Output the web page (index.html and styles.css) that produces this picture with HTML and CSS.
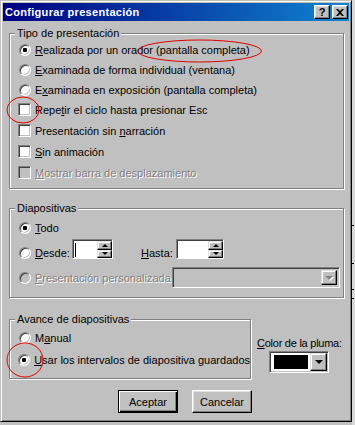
FILE: index.html
```html
<!DOCTYPE html>
<html lang="es">
<head>
<meta charset="utf-8">
<title>Configurar presentación</title>
<link rel="stylesheet" href="styles.css">
</head>
<body>
<div class="screen">
  <div class="window">
    <div class="titlebar">
      <span class="title">Configurar presentación</span>
      <div class="tbtns">
        <span class="tbtn q">?</span>
        <span class="tbtn"><svg width="8" height="7" viewBox="0 0 8 7"><path d="M0 0h2l2 2 2-2h2L5 3.5 8 7H6L4 5 2 7H0l3-3.5z" fill="#000"/></svg></span>
      </div>
    </div>
    <div class="content">
      <div class="group g1">
        <div class="legend">Tipo de presentación</div>
        <div class="row r20"><span class="ctl"><span class="radio on"></span></span><span><u>R</u>ealizada por un orador (pantalla completa)</span></div>
        <div class="row r20"><span class="ctl"><span class="radio"></span></span><span><u>E</u>xaminada de forma individual (ventana)</span></div>
        <div class="row r19"><span class="ctl"><span class="radio"></span></span><span>E<u>x</u>aminada en exposición (pantalla completa)</span></div>
        <div class="row"><span class="ctl"><span class="check"></span></span><span>Repe<u>t</u>ir el ciclo hasta presionar Esc</span></div>
        <div class="row"><span class="ctl"><span class="check"></span></span><span>Presentación sin <u>n</u>arración</span></div>
        <div class="row"><span class="ctl"><span class="check"></span></span><span><u>S</u>in animación</span></div>
        <div class="row"><span class="ctl"><span class="check dis"></span></span><span class="distext"><u>M</u>ostrar barra de desplazamiento</span></div>
      </div>
      <div class="group g2">
        <div class="legend">Diapositivas</div>
        <div class="row r25"><span class="ctl"><span class="radio on"></span></span><span><u>T</u>odo</span></div>
        <div class="row r25">
          <span class="ctl"><span class="radio"></span></span>
          <span class="lbl-desde"><u>D</u>esde:</span>
          <span class="spin s1"><span class="f"><span class="caret"></span></span><span class="ud"><span class="up"><i></i></span><span class="dn"><i></i></span></span></span>
          <span class="lbl-hasta"><u>H</u>asta:</span>
          <span class="spin s2"><span class="f"></span><span class="ud"><span class="up"><i></i></span><span class="dn"><i></i></span></span></span>
        </div>
        <div class="row r25">
          <span class="ctl"><span class="radio dis"></span></span>
          <span class="lbl-pers distext"><u>P</u>resentación personalizada:</span>
          <span class="combo"><span class="ddbtn"><i class="garrow"></i></span></span>
        </div>
      </div>
      <div class="bottom">
        <div class="group g3">
          <div class="legend">Avance de diapositivas</div>
          <div class="row r23"><span class="ctl"><span class="radio"></span></span><span>M<u>a</u>nual</span></div>
          <div class="row r22"><span class="ctl"><span class="radio on"></span></span><span><u>U</u>sar los intervalos de diapositiva guardados</span></div>
        </div>
        <div class="pen">
          <div class="pen-label"><u>C</u>olor de la pluma:</div>
          <div class="pcombo"><span class="swwrap"><span class="swatch"></span></span><span class="ddbtn2"><i class="barrow"></i></span></div>
        </div>
      </div>
      <div class="buttons">
        <span class="btn default">Aceptar</span>
        <span class="btn">Cancelar</span>
      </div>
    </div>
    <svg class="marks" width="352" height="422" viewBox="0 0 352 422">
      <ellipse cx="199.5" cy="51" rx="62" ry="11" fill="none" stroke="#e00000" stroke-width="1"/>
      <ellipse cx="23" cy="110" rx="16" ry="13" fill="none" stroke="#e00000" stroke-width="1"/>
      <ellipse cx="25" cy="360" rx="18" ry="17" fill="none" stroke="#e00000" stroke-width="1"/>
    </svg>
  </div>
  <div class="edge"></div>
</div>
</body>
</html>
```
FILE: styles.css
```css
body {
  margin: 0;
  background: #c0c0c0;
  font-family: "Liberation Sans", Arial, sans-serif;
  font-size: 11px;
  color: #000;
}
u { text-decoration: underline; text-underline-offset: 1px; }

.screen {
  display: flex;
  width: 355px;
  height: 425px;
  overflow: hidden;
}
.window {
  position: relative;
  flex-shrink: 0;
  width: 352px;
  height: 422px;
  box-sizing: border-box;
  background: #c0c0c0;
  border: 1px solid;
  border-color: #c0c0c0 #000 #000 #c0c0c0;
  box-shadow: inset 1px 1px #fff, inset -1px -1px #808080;
  padding: 2px;
  display: flex;
  flex-direction: column;
}
.edge {
  flex-shrink: 0;
  width: 3px;
  height: 425px;
  background:
    linear-gradient(#000, #000) 0 225px / 2px 1px no-repeat,
    linear-gradient(#000, #000) 0 263px / 2px 1px no-repeat,
    linear-gradient(#000, #000) 0 289px / 2px 1px no-repeat,
    linear-gradient(#000, #000) 0 298px / 2px 1px no-repeat,
    #d8d8d8;
}

.titlebar {
  height: 18px;
  flex-shrink: 0;
  background: linear-gradient(to right, #000080, #1084d0);
  display: flex;
  align-items: center;
  justify-content: space-between;
  padding: 0 1px 0 2px;
}
.title {
  color: #fff;
  font-weight: bold;
  font-size: 11px;
  letter-spacing: 0.3px;
}
.tbtns { display: flex; gap: 2px; }
.tbtn {
  width: 16px;
  height: 14px;
  box-sizing: border-box;
  background: #c0c0c0;
  border: 1px solid;
  border-color: #fff #000 #000 #fff;
  box-shadow: inset -1px -1px #808080, inset 1px 1px #dfdfdf;
  display: flex;
  align-items: center;
  justify-content: center;
}
.tbtn.q { font-weight: bold; font-size: 11px; line-height: 12px; }

.content {
  display: flex;
  flex-direction: column;
  padding: 12px 5px 0 6px;
}

.group {
  border: 1px solid #808080;
  box-shadow: inset 1px 1px #fff, 1px 1px #fff;
  display: flex;
  flex-direction: column;
  padding: 0 0 5px 8px;
}
.legend {
  align-self: flex-start;
  margin: -7px 0 0 -3px;
  padding: 0 2px;
  height: 13px;
  line-height: 13px;
  background: #c0c0c0;
}
.g2 { margin-top: 19px; padding-bottom: 7px; }
.g3 { width: 242px; box-sizing: border-box; padding-bottom: 7px; }

.row {
  display: flex;
  align-items: center;
  height: 21px;
  white-space: nowrap;
}
.r19 { height: 19px; }
.r20 { height: 20px; }
.r22 { height: 22px; }
.r23 { height: 23px; }
.r25 { height: 25px; }

.ctl {
  width: 13px;
  margin-right: 4px;
  display: flex;
  justify-content: center;
}
.radio {
  position: relative;
  width: 12px;
  height: 12px;
  box-sizing: border-box;
  border-radius: 50%;
  border: 1px solid;
  border-color: #808080 #fff #fff #808080;
  box-shadow: inset 1px 1px #404040, inset -1px -1px #c0c0c0;
  background: #fff;
}
.radio.dis { background: #c0c0c0; }
.radio.on::after {
  content: "";
  position: absolute;
  left: 3px;
  top: 3px;
  width: 4px;
  height: 4px;
  border-radius: 1px;
  background: #000;
}
.check {
  width: 13px;
  height: 13px;
  box-sizing: border-box;
  border: 1px solid;
  border-color: #808080 #fff #fff #808080;
  box-shadow: inset 1px 1px #404040, inset -1px -1px #c0c0c0;
  background: #fff;
}
.check.dis { background: #c0c0c0; }
.distext { color: #808080; text-shadow: 1px 1px 0 #fff; }

.lbl-desde { width: 37px; }
.lbl-hasta { width: 35px; margin-left: 28px; }
.lbl-pers { width: 137px; }

.spin {
  display: flex;
  height: 20px;
  box-sizing: border-box;
  margin-bottom: 7px;
  border: 1px solid;
  border-color: #808080 #fff #fff #808080;
  box-shadow: inset 1px 1px #404040;
  padding: 1px 0 0 1px;
}
.s1 .f { width: 22px; }
.s2 .f { width: 29px; }
.spin .f {
  background: #fff;
  display: flex;
  align-items: center;
  padding-left: 1px;
}
.caret { width: 1px; height: 14px; background: #000; }
.ud {
  width: 15px;
  display: flex;
  flex-direction: column;
}
.ud > span {
  flex: 1;
  box-sizing: border-box;
  background: #c0c0c0;
  border: 1px solid;
  border-color: #dfdfdf #000 #000 #dfdfdf;
  box-shadow: inset -1px -1px #808080, inset 1px 1px #fff;
  display: flex;
  align-items: center;
  justify-content: center;
}
.up i {
  width: 0; height: 0;
  border: 3px solid transparent;
  border-top-width: 0;
  border-bottom-color: #000;
}
.dn i {
  width: 0; height: 0;
  border: 3px solid transparent;
  border-bottom-width: 0;
  border-top-color: #000;
}

.combo {
  width: 168px;
  height: 21px;
  box-sizing: border-box;
  border: 1px solid;
  border-color: #808080 #fff #fff #808080;
  box-shadow: inset 1px 1px #404040, inset -1px -1px #c0c0c0;
  background: #c0c0c0;
  display: flex;
  justify-content: flex-end;
  padding: 2px;
}
.ddbtn, .ddbtn2 {
  width: 16px;
  box-sizing: border-box;
  background: #c0c0c0;
  border: 1px solid;
  border-color: #dfdfdf #000 #000 #dfdfdf;
  box-shadow: inset -1px -1px #808080, inset 1px 1px #fff;
  display: flex;
  align-items: center;
  justify-content: center;
}
.garrow {
  width: 0; height: 0;
  border: 4px solid transparent;
  border-bottom-width: 0;
  border-top-color: #808080;
  filter: drop-shadow(1px 1px 0 #fff);
}
.barrow {
  width: 0; height: 0;
  border: 4px solid transparent;
  border-bottom-width: 0;
  border-top-color: #000;
}

.bottom { display: flex; margin-top: 21px; }
.pen { margin-left: 6px; display: flex; flex-direction: column; }
.pen-label {
  margin-top: 18px;
  height: 13px;
  line-height: 13px;
  white-space: nowrap;
  letter-spacing: -0.25px;
}
.pcombo {
  margin: 1px 0 0 12px;
  width: 60px;
  height: 22px;
  box-sizing: border-box;
  border: 1px solid;
  border-color: #808080 #fff #fff #808080;
  box-shadow: inset 1px 1px #404040, inset -1px -1px #c0c0c0;
  padding: 1px;
  display: flex;
}
.swwrap {
  flex: 1;
  background: #fff;
  padding: 2px 2px 2px 3px;
  display: flex;
}
.swatch { flex: 1; background: #000; }
.ddbtn2 { width: 17px; }

.buttons {
  display: flex;
  gap: 14px;
  margin-top: 11px;
  padding-left: 109px;
}
.btn {
  width: 60px;
  height: 23px;
  box-sizing: border-box;
  background: #c0c0c0;
  border: 1px solid;
  border-color: #fff #000 #000 #fff;
  box-shadow: inset -1px -1px #808080, inset 1px 1px #dfdfdf;
  display: flex;
  align-items: center;
  justify-content: center;
}
.btn.default {
  border-color: #000;
  box-shadow: inset 1px 1px #fff, inset -1px -1px #000, inset -2px -2px #808080;
}

.marks {
  position: absolute;
  left: -1px;
  top: -1px;
  pointer-events: none;
}
```
